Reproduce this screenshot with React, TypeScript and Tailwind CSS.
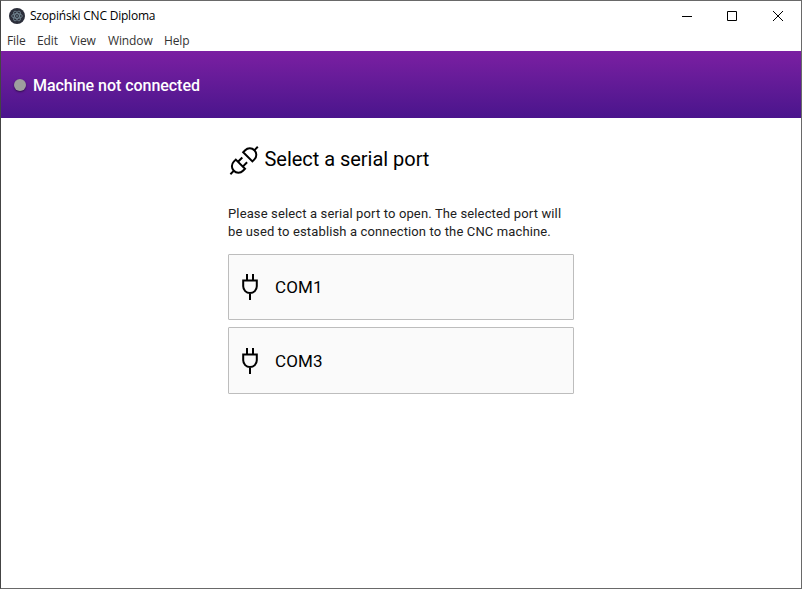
const menus = ['File', 'Edit', 'View', 'Window', 'Help'];
const menuWidths = ['w-[30px]', 'w-[33px]', 'w-[38px]', 'w-[56px]', 'w-[30px]'];

function AppIcon() {
  return (
    <svg className="ml-2 h-4 w-4 shrink-0" viewBox="0 0 16 16" fill="none">
      <circle cx="8" cy="8" r="8" fill="#2b2e3a" />
      <g stroke="#8299a5" strokeWidth="0.7">
        <ellipse cx="8" cy="8" rx="5.4" ry="2.3" />
        <ellipse cx="8" cy="8" rx="5.4" ry="2.3" transform="rotate(60 8 8)" />
        <ellipse cx="8" cy="8" rx="5.4" ry="2.3" transform="rotate(120 8 8)" />
      </g>
      <circle cx="8" cy="8" r="0.7" fill="#9fc0cb" />
    </svg>
  );
}

function DisconnectedIcon() {
  return (
    <svg className="h-8 w-8 shrink-0" viewBox="0 0 32 32" fill="none" stroke="#000" strokeWidth="2">
      <path d="M2.4 30.2 6.2 26.4M26 6.6 29.8 2.8" />
      <path d="M7.8 15.6 17 24.8 15 26.8A6.5 6.5 0 0 1 5.8 17.6Z" />
      <path d="M10 17.8 14.3 13.5M14.8 22.6 19.1 18.3" />
      <path d="M15.2 8.2 24.4 17.4 26.4 15.4A6.5 6.5 0 0 0 17.2 6.2Z" />
    </svg>
  );
}

function PlugIcon() {
  return (
    <svg className="h-8 w-8 shrink-0" viewBox="0 0 32 32" fill="none" stroke="#000" strokeWidth="2">
      <path d="M13 3v6M19 3v6M16 22v7M8.2 9.5h15.6M9.2 9v6.3a6.8 6.8 0 0 0 13.6 0V9" />
    </svg>
  );
}

function PortButton({ name, height }: { name: string; height: string }) {
  return (
    <button className={`flex w-[346px] items-center rounded-[1px] border border-[#bdbdbd] bg-[#fafafa] pl-[5px] text-left ${height}`}>
      <PlugIcon />
      <span className="ml-[9px] text-[17px] leading-6 tracking-[0.1px] text-black">{name}</span>
    </button>
  );
}

export default function App() {
  return (
    <div className="flex h-[589px] w-[802px] flex-col border border-[#696969] border-l-[#444] bg-white font-[Roboto,sans-serif]">
      <header className="flex h-[29px] shrink-0 items-center">
        <AppIcon />
        <span className="ml-[5px] w-[600px] whitespace-nowrap font-['Open_Sans',sans-serif] text-[12px] tracking-[-0.21px] text-black">
          Szopiński CNC Diploma
        </span>
        <div className="ml-auto flex h-full">
          <span className="flex w-[45px] items-center justify-center">
            <svg className="h-[10px] w-[10px]" viewBox="0 0 10 10"><path d="M0 5.5h10" stroke="#000" /></svg>
          </span>
          <span className="flex w-[45px] items-center justify-center">
            <svg className="h-[10px] w-[10px]" viewBox="0 0 10 10"><path d="M.5.5h9v9h-9z" fill="none" stroke="#000" /></svg>
          </span>
          <span className="flex w-[47px] items-center justify-center">
            <svg className="h-[10px] w-[10px]" viewBox="0 0 10 10"><path d="M0 0l10 10M10 0 0 10" stroke="#000" /></svg>
          </span>
        </div>
      </header>
      <nav className="flex h-[21px] shrink-0 items-center pl-[6px] pt-px font-['Open_Sans',sans-serif] text-[12px] tracking-[-0.12px] text-[#333]">
        {menus.map((item, i) => (
          <span key={item} className={`whitespace-nowrap ${menuWidths[i]}`}>{item}</span>
        ))}
      </nav>
      <section className="flex h-[67px] shrink-0 items-center bg-linear-to-b from-[#7b1fa2] to-[#4a148c] pl-[13px]">
        <span className="h-3 w-3 rounded-full bg-[#9e9e9e] shadow-[0_1px_2px_rgba(0,0,0,0.5)]" />
        <span className="ml-[7px] pt-[2px] text-[16px] font-medium leading-6 tracking-[-0.04px] text-white">Machine not connected</span>
      </section>
      <main className="ml-[227px] flex w-[346px] flex-col pt-[26px]">
        <div className="flex h-8 items-center">
          <DisconnectedIcon />
          <h1 className="ml-[4.5px] whitespace-nowrap pb-[2px] text-[20px] leading-7 tracking-[-0.03px] text-black">Select a serial port</h1>
        </div>
        <p className="mt-[29px] whitespace-nowrap text-[13px] leading-[18px] tracking-[0.135px] text-[#212121]">
          Please select a serial port to open. The selected port will
          <br />
          be used to establish a connection to the CNC machine.
        </p>
        <div className="mt-[13px] flex flex-col gap-[7px]">
          <PortButton name="COM1" height="h-[66px]" />
          <PortButton name="COM3" height="h-[67px]" />
        </div>
      </main>
    </div>
  );
}
